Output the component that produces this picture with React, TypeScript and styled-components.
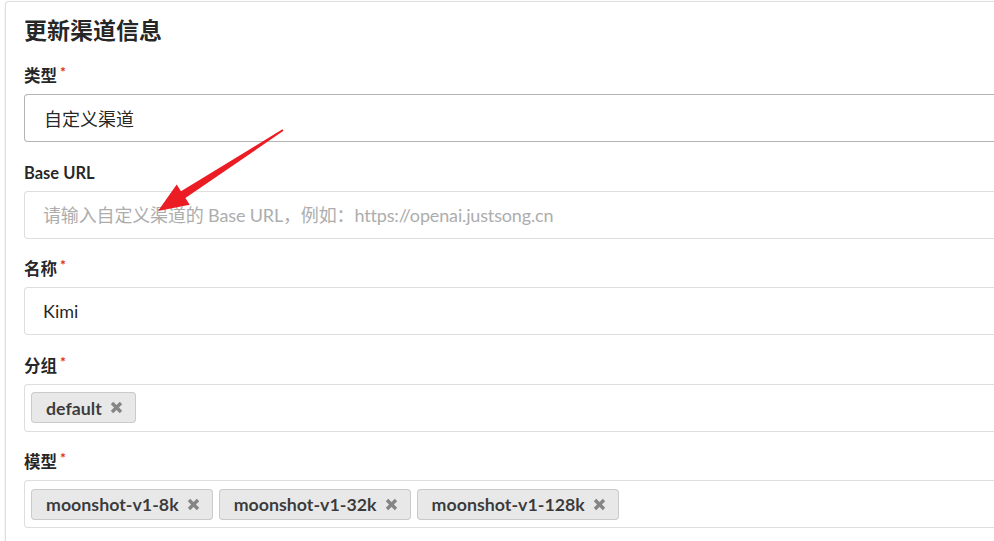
import styled, { createGlobalStyle } from "styled-components"

const GlobalStyle = createGlobalStyle`
  html, body {
    margin: 0;
    padding: 0;
    background: #fff;
    overflow: hidden;
  }

  body {
    font-family: Lato, "Noto Sans CJK SC", "Helvetica Neue", Arial, sans-serif;
    font-size: 18px;
    color: rgba(0, 0, 0, 0.87);
  }
`

const Page = styled.div`
  position: relative;
  width: 994px;
  height: 541px;
  overflow: hidden;
  box-sizing: border-box;
  padding: 1px 0 0 5px;
`

const Card = styled.div`
  width: 1200px;
  min-height: 700px;
  box-sizing: border-box;
  background: #fff;
  border: 1px solid rgba(34, 36, 38, 0.15);
  border-radius: 4px;
  box-shadow: 0 1px 2px 0 rgba(34, 36, 38, 0.15);
  padding: 13px 18px 20px 18px;
`

const Title = styled.h2`
  margin: 0 0 21px;
  font-size: 23px;
  font-weight: 700;
  line-height: 30px;
  height: 30px;
  color: rgba(0, 0, 0, 0.87);
`

const Field = styled.div`
  margin-bottom: 20.5px;
`

const Label = styled.label<{ $required?: boolean }>`
  display: block;
  height: 20px;
  font-size: 16.5px;
  font-weight: 700;
  line-height: 20px;
  margin-bottom: 8px;
  color: rgba(0, 0, 0, 0.87);

  &::after {
    content: ${(p) => (p.$required ? "'*'" : "none")};
    color: #db2828;
    font-size: 14px;
    margin-left: 3px;
    position: relative;
    top: -5px;
  }
`

const Box = styled.div<{ $strong?: boolean }>`
  height: 48px;
  box-sizing: border-box;
  border: 1px solid
    ${(p) => (p.$strong ? "rgba(34, 36, 38, 0.35)" : "rgba(34, 36, 38, 0.15)")};
  border-radius: 4px;
  background: #fff;
  display: flex;
  align-items: center;
  padding: 0 19px;
  font-size: 18px;
`

const TextInput = styled.input`
  display: block;
  width: 100%;
  height: 48px;
  box-sizing: border-box;
  border: 1px solid rgba(34, 36, 38, 0.15);
  border-radius: 4px;
  padding: 0 18px;
  font-family: inherit;
  font-size: 18px;
  color: rgba(0, 0, 0, 0.87);
  outline: none;

  &::placeholder {
    color: #adadad;
    letter-spacing: -0.15px;
  }
`

const Multi = styled(Box)`
  padding: 0 6px;
  gap: 6px;
`

const Chip = styled.span`
  display: inline-flex;
  align-items: center;
  height: 31px;
  box-sizing: border-box;
  padding: 0 13px 0 15px;
  gap: 8px;
  background: #e8e8e8;
  border-radius: 4px;
  box-shadow: inset 0 0 0 1px rgba(34, 36, 38, 0.15);
  font-size: 17.8px;
  font-weight: 700;
  color: rgba(0, 0, 0, 0.75);
`

const Arrow = styled.svg`
  position: absolute;
  top: 0;
  left: 0;
  pointer-events: none;
`

function CloseIcon() {
  return (
    <svg width="13" height="13" viewBox="0 0 13 13">
      <path
        d="M2 2 L11 11 M11 2 L2 11"
        stroke="#858585"
        strokeWidth="3.4"
        strokeLinecap="butt"
      />
    </svg>
  )
}

const groups = ["default"]
const models = ["moonshot-v1-8k", "moonshot-v1-32k", "moonshot-v1-128k"]

export default function App() {
  return (
    <>
      <GlobalStyle />
      <Page>
        <Card>
          <Title>更新渠道信息</Title>
          <Field>
            <Label $required>类型</Label>
            <Box $strong>自定义渠道</Box>
          </Field>
          <Field>
            <Label>Base URL</Label>
            <TextInput placeholder="请输入自定义渠道的 Base URL，例如：https://openai.justsong.cn" />
          </Field>
          <Field>
            <Label $required>名称</Label>
            <TextInput defaultValue="Kimi" />
          </Field>
          <Field>
            <Label $required>分组</Label>
            <Multi>
              {groups.map((g) => (
                <Chip key={g}>
                  {g}
                  <CloseIcon />
                </Chip>
              ))}
            </Multi>
          </Field>
          <Field>
            <Label $required>模型</Label>
            <Multi>
              {models.map((m) => (
                <Chip key={m}>
                  {m}
                  <CloseIcon />
                </Chip>
              ))}
            </Multi>
          </Field>
        </Card>
        <Arrow width="994" height="541" viewBox="0 0 994 541">
          <polygon
            points="282.5,129.2 181,191.3 176.7,184.6 158,211 189.7,204.8 185.4,198.1 283.5,130.8"
            fill="#ec1c24"
          />
        </Arrow>
      </Page>
    </>
  )
}
